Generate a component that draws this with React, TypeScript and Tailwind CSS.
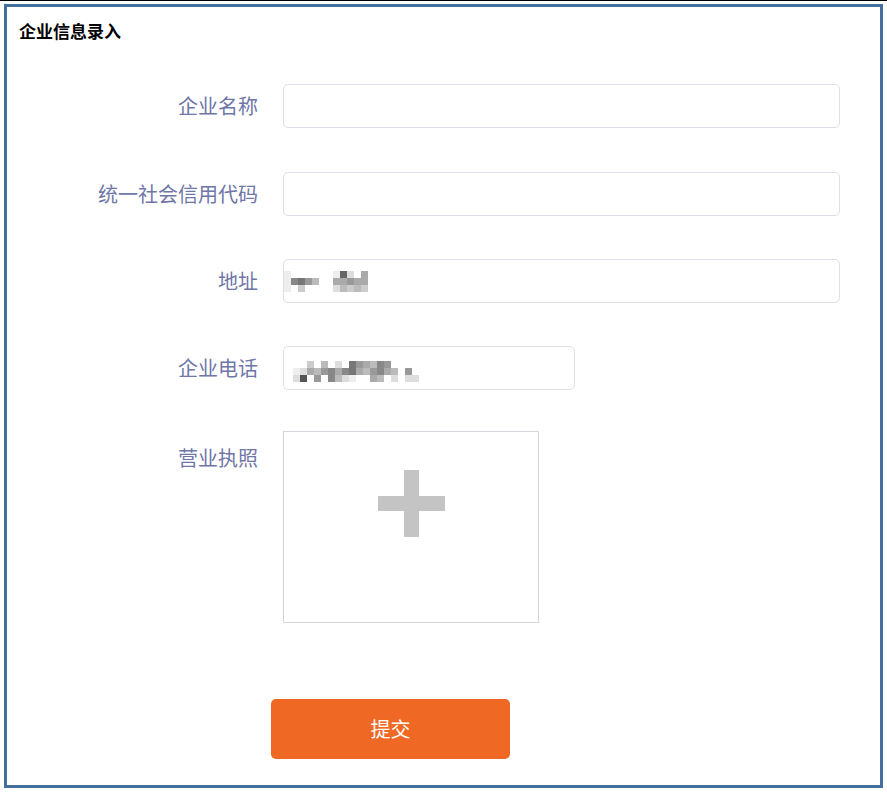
import React from "react";

const FONT = { fontFamily: '"Microsoft YaHei", "Noto Sans CJK SC", "Noto Sans", sans-serif' };

const addrMosaic: string[][] = [
  ["#eee", "", "", "", "", "", "", "#eee", "#666", "#ddd", "", "#aaa"],
  ["#eee", "#888", "#777", "#999", "#bbb", "", "", "#aaa", "#aaa", "#999", "#aaa", "#aaa"],
  ["#eee", "", "#ccc", "", "", "", "", "#ddd", "#bbb", "#ccc", "#bbb", "#ccc"],
];

const phoneMosaic: string[][] = [
  ["", "", "#ccc", "", "#bbb", "", "#ddd", "", "#777", "#999", "#aaa", "#bbb", "#888", "#999", "", "", "", ""],
  ["#eee", "#ddd", "#aaa", "#bbb", "#999", "#888", "#aaa", "#888", "#777", "#aaa", "#bbb", "#999", "#888", "#aaa", "#bbb", "", "#999", ""],
  ["#ddd", "#555", "", "#999", "", "#888", "#bbb", "#ddd", "#eee", "", "", "#aaa", "#bbb", "", "#ddd", "", "#ddd", "#ddd"],
];

function Mosaic({ data }: { data: string[][] }) {
  return (
    <div className="flex flex-col">
      {data.map((row, i) => (
        <div key={i} className="flex">
          {row.map((c, j) => (
            <div key={j} className="w-[7px] h-[7px]" style={{ backgroundColor: c || "transparent" }} />
          ))}
        </div>
      ))}
    </div>
  );
}

function Label({ children, extra = "" }: { children: React.ReactNode; extra?: string }) {
  return (
    <div className={`w-[276px] shrink-0 pr-[25px] text-right text-[20px] leading-[44px] text-[#6f76a8] ${extra}`}>
      {children}
    </div>
  );
}

export default function App() {
  return (
    <div className="w-[887px] h-[793px] bg-white border-t border-black pt-[3px] pl-[4px]" style={FONT}>
      <div className="w-[879px] h-[784px] border-[3px] border-[#44709d] bg-white flex flex-col">
        <div className="pl-[12px] pt-[12px] text-[17px] leading-[24px] font-bold text-black">企业信息录入</div>

        <div className="mt-[41px] flex flex-col">
          <div className="flex">
            <Label>企业名称</Label>
            <div className="w-[557px] h-[44px] border border-[#dcdfe6] rounded-[5px] bg-white" />
          </div>
          <div className="flex mt-[44px]">
            <Label>统一社会信用代码</Label>
            <div className="w-[557px] h-[44px] border border-[#dcdfe6] rounded-[5px] bg-white" />
          </div>
          <div className="flex mt-[43px]">
            <Label>地址</Label>
            <div className="w-[557px] h-[44px] border border-[#dcdfe6] rounded-[5px] bg-white flex items-center pl-[0px]">
              <Mosaic data={addrMosaic} />
            </div>
          </div>
          <div className="flex mt-[43px]">
            <Label>企业电话</Label>
            <div className="w-[292px] h-[44px] border border-[#dcdfe6] rounded-[5px] bg-white flex items-center pl-[9px] pt-[6px]">
              <Mosaic data={phoneMosaic} />
            </div>
          </div>
          <div className="flex mt-[41px]">
            <Label extra="pt-[5px]">营业执照</Label>
            <div className="w-[256px] h-[192px] border border-[#d3d6da] bg-white flex items-center justify-center pb-[48px]">
              <svg width="67" height="67" viewBox="0 0 67 67">
                <rect x="26" y="0" width="15" height="67" fill="#c4c4c4" />
                <rect x="0" y="26" width="67" height="15" fill="#c4c4c4" />
              </svg>
            </div>
          </div>
        </div>

        <div className="mt-[76px] pl-[264px]">
          <button className="w-[239px] h-[60px] rounded-[5px] bg-[#f06924] text-white text-[20px] flex items-center justify-center">
            提交
          </button>
        </div>
      </div>
    </div>
  );
}
